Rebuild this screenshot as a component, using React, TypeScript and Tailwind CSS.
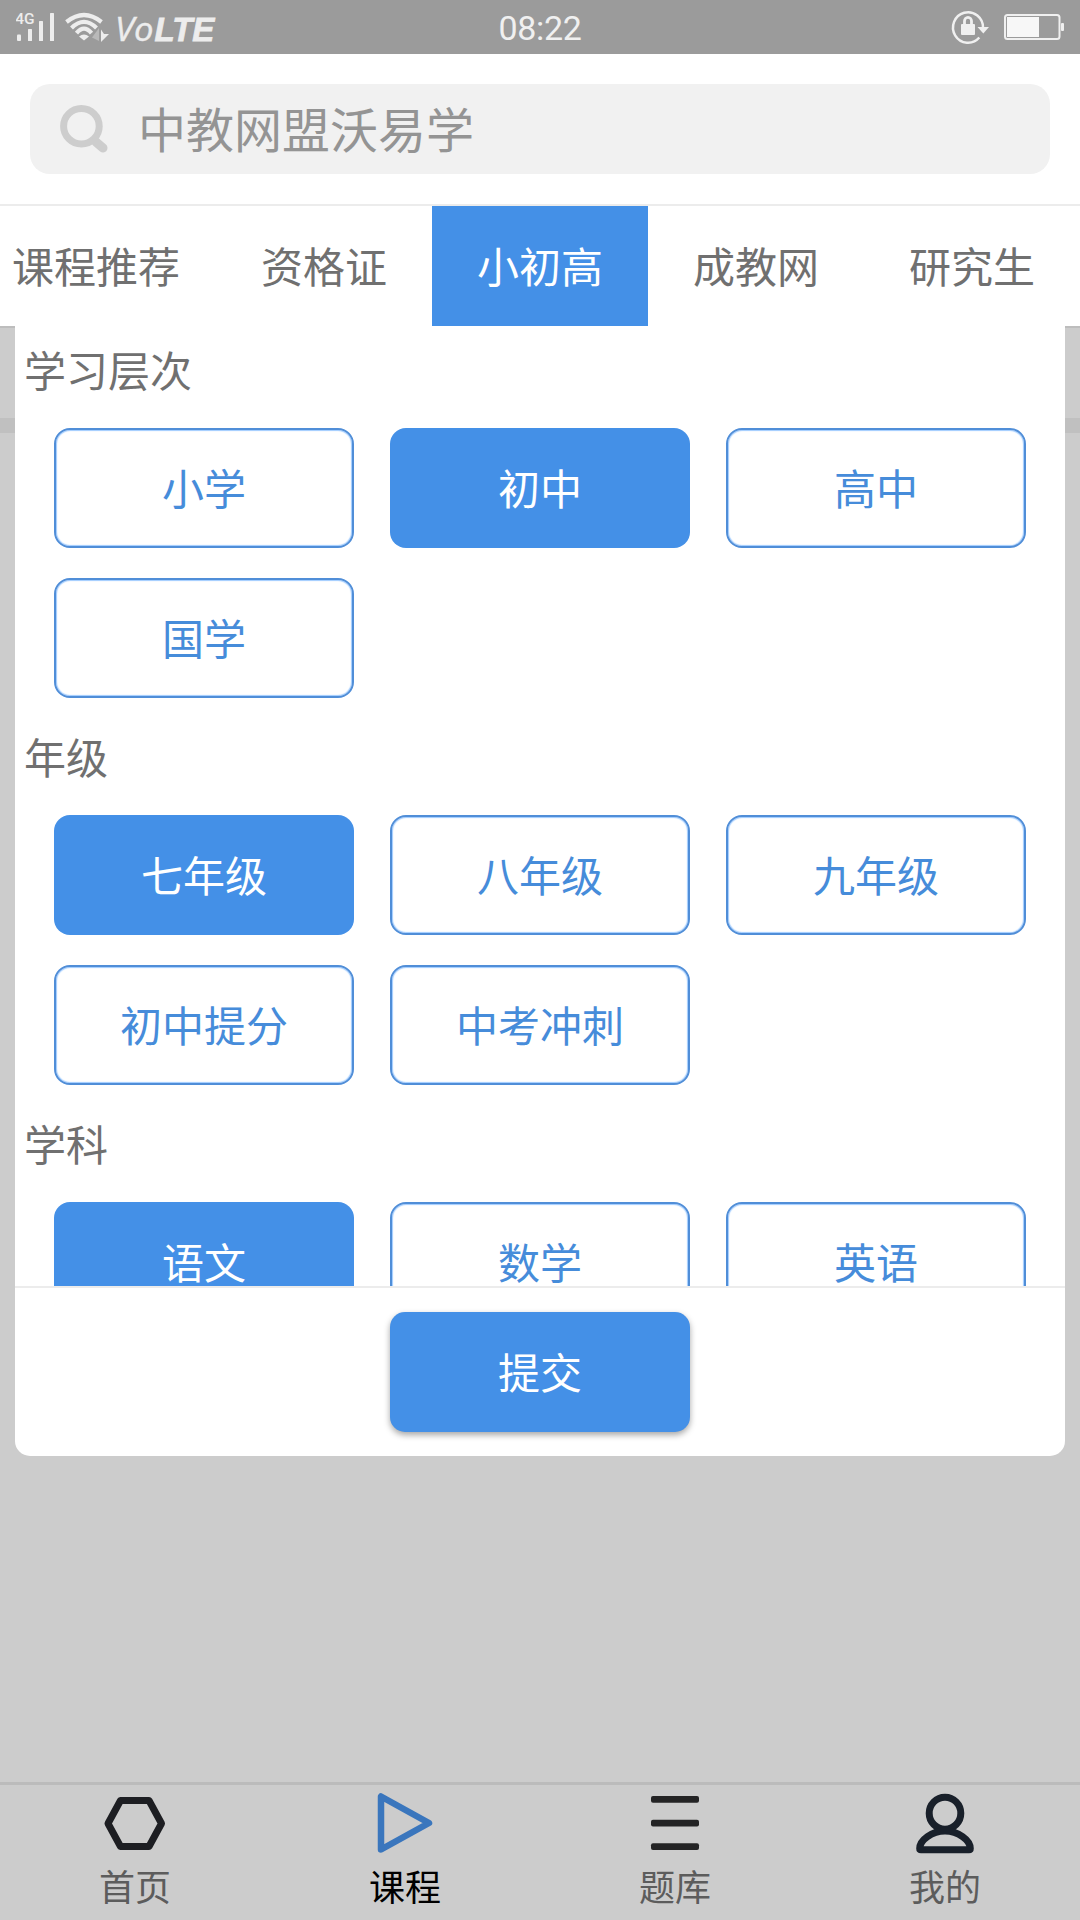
import React from "react";

const tabs = ["课程推荐", "资格证", "小初高", "成教网", "研究生"];

const sections = [
  { title: "学习层次", items: ["小学", "初中", "高中", "国学"], active: "初中" },
  { title: "年级", items: ["七年级", "八年级", "九年级", "初中提分", "中考冲刺"], active: "七年级" },
  { title: "学科", items: ["语文", "数学", "英语"], active: "语文" },
];

function StatusBar() {
  return (
    <header className="relative flex h-[54px] shrink-0 items-center justify-between bg-[#9b9b9b] px-4 text-[#f0f0f0]">
      <svg width="210" height="54" viewBox="16 0 210 54" fill="#ededed">
        <text x="15.200" y="24" fontSize="15.500" fontFamily="Roboto" fontWeight="500">4G</text>
        <rect x="17" y="34.500" width="4" height="6.500" rx="1" />
        <rect x="28" y="29" width="4" height="12" rx="0.500" />
        <rect x="39" y="21" width="4" height="20" rx="0.500" />
        <rect x="50" y="13" width="4" height="28" rx="0.500" />
        <g fill="none" stroke="#ededed" strokeWidth="4.200">
          <path d="M66.500 22 Q84 8 101.500 22" />
          <path d="M71.500 28 Q84 15.800 96.500 28" />
          <path d="M76.500 33.200 Q84 24.200 91.500 33.200" />
        </g>
        <path d="M79 36.500 Q84 32.500 89 36.500 L84 40.500Z" />
        <path d="M99 28 V41 L92 37.500Z" fill="#b9b9b9" />
        <path d="M101 29.500 L104 34 H109 L101 42Z" />
        <text x="115" y="41" fontSize="32.500" fontFamily="Open Sans" fontStyle="italic" textLength="38.500" lengthAdjust="spacingAndGlyphs" stroke="#ededed" strokeWidth="0.400">Vo</text>
        <text x="154.500" y="41" fontSize="33" fontFamily="Liberation Sans" fontWeight="700" fontStyle="italic" stroke="#ededed" strokeWidth="0.800">LTE</text>
      </svg>
      <div className="absolute inset-x-0 top-2 text-center font-['Roboto'] text-[34px] leading-[40px] tracking-[-0.3px]">
        08:22
      </div>
      <svg width="116" height="54" viewBox="948 0 116 54" fill="#f0f0f0">
        <path d="M979.300 37.500 A15 15.200 0 1 1 983 28" fill="none" stroke="#f0f0f0" strokeWidth="2.500" />
        <path d="M977.500 27 H989 L983.300 33.500Z" />
        <rect x="961" y="24" width="14" height="11" rx="1" />
        <path d="M964.500 25 V21 A3.500 3.700 0 0 1 971.500 21 V25" fill="none" stroke="#f0f0f0" strokeWidth="2.800" />
        <rect x="1005" y="15" width="54.500" height="24" rx="2.500" fill="none" stroke="#f0f0f0" strokeWidth="2" />
        <rect x="1007" y="17" width="32" height="20" fill="#f7f7f7" />
        <rect x="1061" y="23" width="3" height="8" rx="1" />
      </svg>
    </header>
  );
}

function Option({ label, active }: { label: string; active: boolean }) {
  return (
    <button
      className={
        active
          ? "flex h-[120px] items-center justify-center rounded-[16px] bg-[#4490e7] pb-[3px] leading-none text-white"
          : "flex h-[120px] items-center justify-center rounded-[16px] border-2 border-[#508ed8] bg-white pb-[3px] leading-none text-[#468cda] shadow-[inset_0_0_1px_1px_#9fcbff]"
      }
    >
      {label}
    </button>
  );
}

function NavItem({ label, active, children }: { label: string; active?: boolean; children: React.ReactNode }) {
  return (
    <button className="flex w-1/4 flex-col items-center pt-[5px]">
      <svg width="66" height="66" viewBox="0 0 66 66" fill="none" strokeLinejoin="round" strokeLinecap="round">
        {children}
      </svg>
      <span
        className={
          active
            ? "mt-[5px] text-[36px] leading-[48px] text-black"
            : "mt-[5px] text-[36px] leading-[48px] text-[#5c5c5c]"
        }
      >
        {label}
      </span>
    </button>
  );
}

export default function App() {
  return (
    <div className="flex h-[1920px] w-[1080px] flex-col overflow-hidden bg-[#cccccc] font-['Noto_Sans_CJK_SC',sans-serif] text-[42px] leading-[60px]">
      <StatusBar />
      <div className="h-[152px] shrink-0 border-b-2 border-[#ececec] bg-white px-[30px] pt-[30px]">
        <div className="flex h-[90px] items-center rounded-[20px] bg-[#f1f1f1] pl-[30px] text-[48px] text-[#949494]">
          <svg width="48" height="50" viewBox="0 0 48 50" fill="none" stroke="#cdcdcd" strokeLinecap="round">
            <circle cx="21.400" cy="22.200" r="17.800" strokeWidth="7" />
            <path d="M36 38 L43 44" strokeWidth="9" />
          </svg>
          <span className="ml-[30px] pb-[4px] leading-[70px]">中教网盟沃易学</span>
        </div>
      </div>
      <nav className="-ml-6 flex h-[120px] w-[1104px] shrink-0 bg-white">
        {tabs.map((t) => (
          <button
            key={t}
            className={
              t === "小初高"
                ? "min-w-[216px] bg-[#4490e7] px-9 pb-[3px] text-white"
                : "min-w-[216px] px-9 pb-[3px] text-[#707070]"
            }
          >
            {t}
          </button>
        ))}
      </nav>

      <div className="h-[1456px] shrink-0 bg-[linear-gradient(to_bottom,#bdbdbd_0_2px,#cccccc_2px_92px,#c0c0c0_92px_107px,#cccccc_107px)] px-[15px]">
        <section className="flex h-[1130px] flex-col overflow-hidden rounded-b-[15px] bg-white">
          <div className="h-[960px] shrink-0 overflow-hidden">
            {sections.map((s) => (
              <div key={s.title} className="pb-[15px]">
                <h2 className="h-[102px] pt-[13px] pl-[9px] text-[#707070]">{s.title}</h2>
                <div className="grid grid-cols-3 gap-x-9 gap-y-[30px] px-[39px]">
                  {s.items.map((i) => (
                    <Option key={i} label={i} active={i === s.active} />
                  ))}
                </div>
              </div>
            ))}
          </div>
          <div className="flex h-[170px] justify-center border-t-2 border-[#ececec] pt-6">
            <button className="h-[120px] w-[300px] rounded-[15px] bg-[#4490e7] pb-[3px] text-white shadow-[0_3px_6px_rgba(0,0,0,0.35)]">
              提交
            </button>
          </div>
        </section>
      </div>

      <footer className="flex h-[138px] shrink-0 border-t-[3px] border-[#bbbbbb]">
        <NavItem label="首页">
          <path d="M18.500 10.500 H47 L59.500 33.500 L47 56.500 H18.500 L6 33.500Z" stroke="#1d1e22" strokeWidth="7" />
        </NavItem>
        <NavItem label="课程" active>
          <path d="M9 6.500 V59.500 L57 33Z" stroke="#3a76bd" strokeWidth="6.500" />
        </NavItem>
        <NavItem label="题库">
          <g fill="#242425">
            <rect x="9" y="6" width="48" height="6.800" rx="2" />
            <rect x="9" y="29.700" width="48" height="6.800" rx="2" />
            <rect x="9" y="53.300" width="48" height="6.800" rx="2" />
          </g>
        </NavItem>
        <NavItem label="我的">
          <g stroke="#19202a" strokeWidth="7">
            <ellipse cx="33" cy="23.200" rx="15.800" ry="16" />
            <path d="M33 41 C20 41 7.700 50 7.700 58.500 Q7.700 59.800 9 59.800 H57 Q58.300 59.800 58.300 58.500 C58.300 50 46 41 33 41Z" />
          </g>
        </NavItem>
      </footer>
    </div>
  );
}
